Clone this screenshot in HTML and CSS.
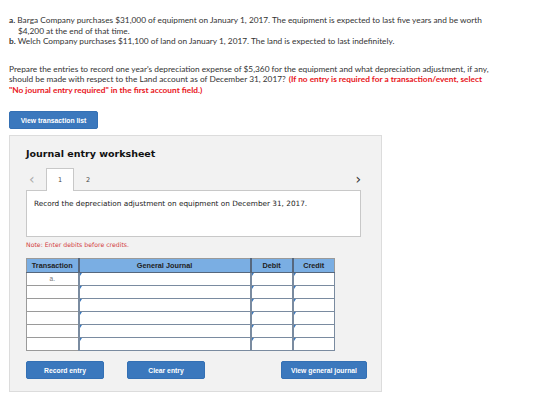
FILE: index.html
```html
<!DOCTYPE html>
<html lang="en">
<head>
  <meta charset="UTF-8">
  <title>Journal entry worksheet</title>
  <link rel="stylesheet" href="styles.css">
</head>
<body>
  <div class="problem">
    <p class="item"><b>a.</b> Barga Company purchases $31,000 of equipment on January 1, 2017. The equipment is expected to last five years and be worth $4,200 at the end of that time.</p>
    <p class="item"><b>b.</b> Welch Company purchases $11,100 of land on January 1, 2017. The land is expected to last indefinitely.</p>
  </div>

  <p class="question">Prepare the entries to record one year's depreciation expense of $5,360 for the equipment and what depreciation adjustment, if any, should be made with respect to the Land account as of December 31, 2017?<span class="req first">(If no entry is required for a transaction/event, select</span> <span class="req">"No journal entry required" in the first account field.)</span></p>

  <button class="btn btn-list">View transaction list</button>

  <div class="worksheet">
    <h2>Journal entry worksheet</h2>
    <div class="tabs">
      <span class="arrow">&lsaquo;</span>
      <span class="tab active">1</span>
      <span class="tab">2</span>
      <span class="arrow next">&rsaquo;</span>
    </div>
    <div class="prompt">Record the depreciation adjustment on equipment on December 31, 2017.</div>
    <div class="note">Note: Enter debits before credits.</div>

    <table class="journal">
      <thead>
        <tr><th class="c-tr">Transaction</th><th class="c-gj">General Journal</th><th class="c-amt">Debit</th><th class="c-amt">Credit</th></tr>
      </thead>
      <tbody>
        <tr><td class="tr">a.</td><td class="in"></td><td class="in"></td><td class="in"></td></tr>
        <tr><td class="tr"></td><td class="in"></td><td class="in"></td><td class="in"></td></tr>
        <tr><td class="tr"></td><td class="in"></td><td class="in"></td><td class="in"></td></tr>
        <tr><td class="tr"></td><td class="in"></td><td class="in"></td><td class="in"></td></tr>
        <tr><td class="tr"></td><td class="in"></td><td class="in"></td><td class="in"></td></tr>
        <tr><td class="tr"></td><td class="in"></td><td class="in"></td><td class="in"></td></tr>
      </tbody>
    </table>

    <div class="actions">
      <button class="btn btn-act">Record entry</button>
      <button class="btn btn-act">Clear entry</button>
      <button class="btn btn-act btn-view">View general journal</button>
    </div>
  </div>
</body>
</html>
```

FILE: styles.css
```css
*{margin:0;padding:0;box-sizing:border-box}
body{font-family:Lato,"Open Sans",sans-serif;color:#333;background:#fff;padding:15px 10px 0 9px;width:560px}
.problem .item{font-size:8.3px;line-height:10.5px;padding-left:9px;text-indent:-9px;width:485px}
.problem b{font-weight:bold}
.question{font-size:8.3px;line-height:10.5px;margin-top:17px;width:485px}
.req{color:#e8141a;font-weight:bold}
.req.first{margin-left:3px}
.btn{font-family:"Liberation Sans",Arial,sans-serif;font-weight:bold;color:#fff;background:#3b78bd;border:1px solid #3470b4;border-radius:2px;font-size:6.8px;display:flex;align-items:center;justify-content:center;height:18px}
.btn-list{width:89px;margin-top:16px}
.worksheet{margin-top:6px;width:373px;height:257px;background:#f2f2f2;border:1px solid #dcdcdc;padding:11px 0 0 16px;font-family:"DejaVu Sans",Verdana,sans-serif}
.worksheet h2{font-size:9.5px;font-weight:bold;color:#111;height:14px;line-height:14px}
.tabs{display:flex;align-items:flex-end;height:22px;margin-top:7px;width:335px}
.arrow{font-size:14px;color:#aaa;width:20px;padding-left:3px;line-height:17px;align-self:center}
.arrow.next{margin-left:auto;color:#333;width:auto;padding:0}
.tab{font-size:6.5px;color:#444;width:28px;height:23px;display:flex;align-items:center;justify-content:center;margin-bottom:-1px}
.tab.active{background:#fff;border:1px solid #c8c8c8;border-bottom:none;position:relative;z-index:1}
.prompt{width:335px;height:47px;background:#fff;border:1px solid #c8c8c8;font-size:7.3px;color:#222;padding:8px 0 0 7px}
.note{font-size:6.2px;color:#d3403e;margin-top:4px;height:12px}
.journal{border-collapse:collapse;border:1px solid #9a9a9a;font-family:"Liberation Sans",Arial,sans-serif;margin-top:5px}
.journal th{background:#7aaee3;color:#222;font-size:7.3px;font-weight:bold;height:14px;border-left:2px solid #56677d;border-bottom:1px solid #56677d}
.journal th:first-child{border-left:none}
.c-tr{width:52px}
.c-gj{width:172px}
.c-amt{width:42px}
.journal td{height:13px;background:#fff}
.journal td.tr{font-size:6.5px;color:#777;text-align:center;border:1px solid #9a9a9a;vertical-align:top;padding-top:2px}
.journal td.in{border:2px solid #7a8ba0;border-width:1px 1px 1px 2px;position:relative}
.journal td.in::before{content:"";position:absolute;left:0;top:0;border-top:3px solid #3b78bd;border-right:2px solid transparent}
.actions{display:flex;margin-top:10px;width:341px}
.btn-act{width:78px}
.btn-act + .btn-act{margin-left:23px}
.btn-act.btn-view{margin-left:auto;width:86px}
```
